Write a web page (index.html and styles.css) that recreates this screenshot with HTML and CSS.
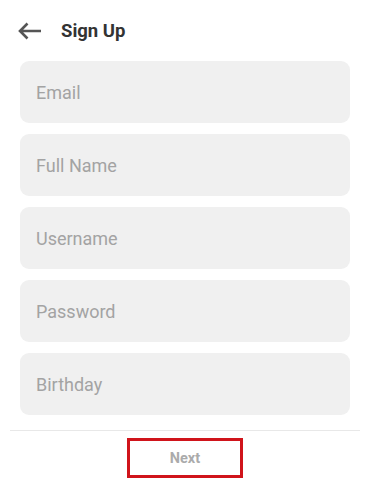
FILE: index.html
```html
<!DOCTYPE html>
<html>
<head>
<meta charset="utf-8">
<link rel="stylesheet" href="styles.css">
</head>
<body>
<div class="screen">
  <header class="topbar">
    <svg class="back" width="24" height="18" viewBox="0 0 24 18">
      <path d="M23 9H2M9.5 1.5L2 9l7.5 7.5" fill="none" stroke="#555" stroke-width="2.6" stroke-linecap="butt" stroke-linejoin="miter"/>
    </svg>
    <h1 class="title">Sign Up</h1>
  </header>
  <div class="fields">
    <div class="field">Email</div>
    <div class="field">Full Name</div>
    <div class="field">Username</div>
    <div class="field">Password</div>
    <div class="field">Birthday</div>
  </div>
  <div class="footer">
    <div class="next-wrap"><span class="next">Next</span></div>
  </div>
</div>
</body>
</html>
```
FILE: styles.css
```css
html, body {
  margin: 0;
  padding: 0;
  background: #fff;
}
body {
  font-family: Roboto, "Liberation Sans", sans-serif;
}
.screen {
  width: 370px;
  height: 493px;
  display: flex;
  flex-direction: column;
}
.topbar {
  height: 61px;
  display: flex;
  align-items: center;
  padding-left: 18px;
  box-sizing: border-box;
}
.back {
  display: block;
}
.title {
  margin: 1px 0 0 19px;
  font-size: 18.5px;
  font-weight: 700;
  color: #333;
}
.fields {
  display: flex;
  flex-direction: column;
  gap: 11px;
  padding: 0 20px;
}
.field {
  height: 62px;
  background: #f0f0f0;
  border-radius: 9px;
  display: flex;
  align-items: center;
  padding-left: 16px;
  font-size: 18px;
  color: #a3a3a3;
}
.footer {
  margin: 15px 10px 0;
  border-top: 1px solid #e8e8e8;
  display: flex;
  justify-content: center;
  padding-top: 7px;
}
.next-wrap {
  width: 110px;
  height: 34px;
  border: 3px solid #d0141b;
  display: flex;
  align-items: center;
  justify-content: center;
}
.next {
  font-size: 14.5px;
  font-weight: 700;
  color: #ababab;
}
```
